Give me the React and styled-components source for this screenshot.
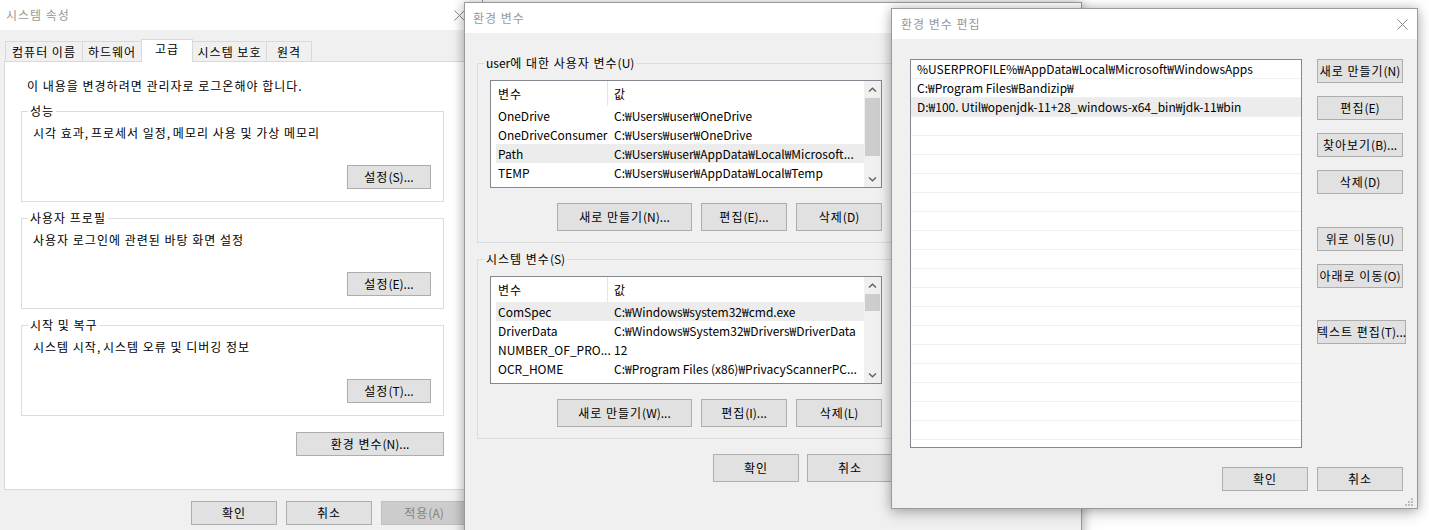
import React from "react";
import styled, { createGlobalStyle } from "styled-components";

const GlobalStyle = createGlobalStyle`
  html, body { margin: 0; padding: 0; background: #fff; }
  * { box-sizing: border-box; }
`;

const Desktop = styled.div`
  position: relative;
  width: 1429px;
  height: 530px;
  overflow: hidden;
  background: #fff;
  font-family: "Noto Sans CJK KR", "Noto Sans", sans-serif;
  font-size: 12px;
  line-height: 16px;
  color: #000;
`;

/* Hangul in the reference font is a little wider than in Noto Sans CJK */
const HangulRun = styled.span`
  letter-spacing: 1px;
`;

function K({ children }) {
  if (typeof children !== "string") return children;
  const parts = children.split(/([\uAC00-\uD7A3][\uAC00-\uD7A3 ]*)/);
  return parts.map((p, i) =>
    i % 2 ? <HangulRun key={i}>{p}</HangulRun> : p
  );
}

const Window = styled.section`
  position: absolute;
  left: ${(p) => p.$x}px;
  top: ${(p) => p.$y}px;
  width: ${(p) => p.$w}px;
  height: ${(p) => p.$h}px;
  z-index: ${(p) => p.$z};
  background: #f0f0f0;
  border: 1px solid #9a9a9a;
  box-shadow: ${(p) =>
    p.$shadow
      ? "0 0 10px rgba(0,0,0,0.22), 0 5px 14px rgba(0,0,0,0.18)"
      : "none"};
  display: flex;
  flex-direction: column;
`;

const TitleBar = styled.header`
  flex: none;
  height: ${(p) => p.$h}px;
  background: #fff;
  display: flex;
  align-items: center;
  padding-left: ${(p) => p.$pad}px;
  color: #999;
`;

const TitleText = styled.span`
  flex: 1;
  white-space: nowrap;
`;

const CloseBox = styled.div`
  width: ${(p) => p.$w}px;
  height: 100%;
  display: flex;
  align-items: center;
  justify-content: center;
`;

const CloseIcon = () => (
  <svg width="11" height="11" viewBox="0 0 11 11">
    <path d="M0.5 0.5 L10.5 10.5 M10.5 0.5 L0.5 10.5" stroke="#8a8a8a" strokeWidth="1" fill="none" />
  </svg>
);

const Btn = styled.button`
  flex: none;
  width: ${(p) => p.$w}px;
  height: ${(p) => p.$h || 24}px;
  margin: 0;
  padding: 0;
  font: inherit;
  line-height: 16px;
  white-space: nowrap;
  color: ${(p) => (p.disabled ? "#838383" : "#000")};
  background: ${(p) => (p.disabled ? "#cccccc" : "#e1e1e1")};
  border: 1px solid ${(p) => (p.disabled ? "#bfbfbf" : "#adadad")};
  display: flex;
  align-items: center;
  justify-content: center;
`;

const Button = ({ children, ...rest }) => (
  <Btn {...rest}>
    <K>{children}</K>
  </Btn>
);

const ButtonRow = styled.div`
  display: flex;
  justify-content: flex-end;
  gap: ${(p) => p.$gap}px;
  margin-top: ${(p) => p.$mt}px;
  padding-right: ${(p) => p.$pr || 0}px;
`;

/* ---------- Dialog 1: 시스템 속성 ---------- */

const SysBody = styled.div`
  flex: 1;
  padding: 9px 4px 0 4px;
  display: flex;
  flex-direction: column;
`;

const TabRow = styled.div`
  position: relative;
  z-index: 1;
  height: 22px;
  padding-left: 1px;
  display: flex;
  align-items: flex-end;
`;

const Tab = styled.div`
  width: ${(p) => p.$w}px;
  height: ${(p) => (p.$active ? 23 : 20)}px;
  margin-bottom: ${(p) => (p.$active ? -1 : 0)}px;
  margin-left: -1px;
  background: ${(p) => (p.$active ? "#fff" : "#f0f0f0")};
  border: 1px solid #d9d9d9;
  border-bottom: none;
  display: flex;
  align-items: center;
  justify-content: center;
  padding-bottom: ${(p) => (p.$active ? 4 : 0)}px;
  white-space: nowrap;
  &:first-child {
    margin-left: 0;
  }
`;

const TabPanel = styled.div`
  height: 429px;
  background: #fff;
  border: 1px solid #d9d9d9;
  padding: 16px 0 0 16px;
`;

const PanelColumn = styled.div`
  width: 423px;
  display: flex;
  flex-direction: column;
`;

const Notice = styled.div`
  padding-left: 6px;
  white-space: nowrap;
`;

const GroupBox = styled.fieldset`
  width: ${(p) => p.$w}px;
  margin: ${(p) => p.$mt}px 0 0 0;
  padding: 0 ${(p) => p.$pr}px ${(p) => p.$pb}px ${(p) => p.$pl}px;
  border: 1px solid #dcdcdc;
  min-inline-size: 0;
  display: flex;
  flex-direction: column;
`;

const Legend = styled.legend`
  padding: 0 2px;
  margin-left: ${(p) => p.$ml}px;
  line-height: 16px;
  white-space: nowrap;
`;

const GroupText = styled.div`
  margin-top: 6px;
  white-space: nowrap;
`;

/* ---------- Dialog 2: 환경 변수 ---------- */

const EnvBody = styled.div`
  flex: 1;
  padding: 22px 0 0 12px;
`;

const EnvColumn = styled.div`
  width: 418px;
  display: flex;
  flex-direction: column;
`;

const ListView = styled.div`
  margin-top: 9px;
  width: 392px;
  height: 108px;
  background: #fff;
  border: 1px solid #828790;
  display: flex;
  overflow: hidden;
`;

const ListMain = styled.div`
  flex: 1;
  min-width: 0;
  padding-left: 5px;
  overflow: hidden;
`;

const ListGrid = styled.div`
  display: grid;
  grid-template-columns: 112px 1fr;
  height: ${(p) => p.$h}px;
  background: ${(p) => (p.$sel ? "#ececec" : "transparent")};
  align-items: center;
`;

const HeadCell = styled.div`
  height: 100%;
  display: flex;
  align-items: center;
  padding-left: ${(p) => p.$pl}px;
  border-right: ${(p) => (p.$divider ? "1px solid #e5e5e5" : "none")};
`;

const Cell = styled.div`
  padding-left: ${(p) => p.$pl}px;
  white-space: nowrap;
  overflow: ${(p) => (p.$clip ? "hidden" : "visible")};
`;

const ScrollBar = styled.div`
  width: 17px;
  flex: none;
  background: #f0f0f0;
  display: flex;
  flex-direction: column;
  align-items: center;
`;

const ArrowBox = styled.div`
  height: 17px;
  width: 17px;
  flex: none;
  display: flex;
  align-items: center;
  justify-content: center;
`;

const Track = styled.div`
  flex: 1;
  width: 100%;
  display: flex;
  justify-content: center;
`;

const Thumb = styled.div`
  width: 15px;
  height: ${(p) => p.$h}px;
  background: #cdcdcd;
`;

const Chevron = ({ down }) => (
  <svg width="9" height="6" viewBox="0 0 9 6">
    <path
      d={down ? "M1 1.5 L4.5 4.8 L8 1.5" : "M1 4.5 L4.5 1.2 L8 4.5"}
      stroke="#606060"
      strokeWidth="1.4"
      fill="none"
    />
  </svg>
);

/* ---------- Dialog 3: 환경 변수 편집 ---------- */

const EditBody = styled.div`
  flex: 1;
  padding: 20px 11px 0 18px;
  display: flex;
  flex-direction: column;
`;

const EditMain = styled.div`
  display: flex;
  gap: 15px;
`;

const EditList = styled.div`
  width: 392px;
  height: 389px;
  flex: none;
  background: #fff;
  border: 1px solid #828790;
  overflow: hidden;
`;

const EditRow = styled.div`
  height: 19px;
  padding-left: 6px;
  border-bottom: 1px solid #efefef;
  background: ${(p) => (p.$sel ? "#ececec" : "#fff")};
  display: flex;
  align-items: center;
  white-space: nowrap;
`;

const SideButtons = styled.div`
  width: 89px;
  display: flex;
  flex-direction: column;
  align-items: flex-start;
  gap: 13px;
`;

const SideSpacer = styled.div`
  height: ${(p) => p.$h}px;
  margin-top: -13px;
`;

const Grip = styled.svg`
  position: absolute;
  right: 4px;
  bottom: 2px;
`;

const userVars = [
  ["OneDrive", "C:₩Users₩user₩OneDrive"],
  ["OneDriveConsumer", "C:₩Users₩user₩OneDrive"],
  ["Path", "C:₩Users₩user₩AppData₩Local₩Microsoft..."],
  ["TEMP", "C:₩Users₩user₩AppData₩Local₩Temp"],
];
const sysVars = [
  ["ComSpec", "C:₩Windows₩system32₩cmd.exe"],
  ["DriverData", "C:₩Windows₩System32₩Drivers₩DriverData"],
  ["NUMBER_OF_PRO...", "12"],
  ["OCR_HOME", "C:₩Program Files (x86)₩PrivacyScannerPC..."],
];
const pathItems = [
  "%USERPROFILE%₩AppData₩Local₩Microsoft₩WindowsApps",
  "C:₩Program Files₩Bandizip₩",
  "D:₩100. Util₩openjdk-11+28_windows-x64_bin₩jdk-11₩bin",
];

function VarList({ rows, selected, thumb }) {
  return (
    <ListView>
      <ListMain>
        <ListGrid $h={25}>
          <HeadCell $pl={2} $divider>
            <K>변수</K>
          </HeadCell>
          <HeadCell $pl={6}>
            <K>값</K>
          </HeadCell>
        </ListGrid>
        {rows.map(([k, v], i) => (
          <ListGrid key={k} $h={19} $sel={i === selected}>
            <Cell $pl={2}>{k}</Cell>
            <Cell $pl={6} $clip>{v}</Cell>
          </ListGrid>
        ))}
      </ListMain>
      <ScrollBar>
        <ArrowBox>
          <Chevron />
        </ArrowBox>
        <Track>
          <Thumb $h={thumb} />
        </Track>
        <ArrowBox>
          <Chevron down />
        </ArrowBox>
      </ScrollBar>
    </ListView>
  );
}

function SettingGroup({ title, text, button, first }) {
  return (
    <GroupBox $w={423} $mt={first ? 9 : 8} $pl={11} $pr={12} $pb={12}>
      <Legend $ml={-5}>
        <K>{title}</K>
      </Legend>
      <GroupText>
        <K>{text}</K>
      </GroupText>
      <ButtonRow $gap={0} $mt={24}>
        <Button $w={84}>{button}</Button>
      </ButtonRow>
    </GroupBox>
  );
}

function EnvGroup({ title, first, rows, selected, thumb, buttons }) {
  return (
    <GroupBox $w={418} $mt={first ? 0 : 8} $pl={12} $pr={12} $pb={11}>
      <Legend $ml={-6}>
        <K>{title}</K>
      </Legend>
      <VarList rows={rows} selected={selected} thumb={thumb} />
      <ButtonRow $gap={9} $mt={15}>
        <Button $w={135} $h={28}>{buttons[0]}</Button>
        <Button $w={86} $h={28}>{buttons[1]}</Button>
        <Button $w={86} $h={28}>{buttons[2]}</Button>
      </ButtonRow>
    </GroupBox>
  );
}

const tabs = [
  ["컴퓨터 이름", 78],
  ["하드웨어", 60],
  ["고급", 52, true],
  ["시스템 보호", 75],
  ["원격", 46],
];

export default function App() {
  const emptyRows = Array.from({ length: 18 });
  return (
    <Desktop>
      <GlobalStyle />

      <Window $x={-1} $y={-1} $w={484} $h={570} $z={1}>
        <TitleBar $h={30} $pad={6}>
          <TitleText>
            <K>시스템 속성</K>
          </TitleText>
          <CloseBox $w={46}>
            <CloseIcon />
          </CloseBox>
        </TitleBar>
        <SysBody>
          <TabRow>
            {tabs.map(([label, w, active]) => (
              <Tab key={label} $w={w} $active={active}>
                <K>{label}</K>
              </Tab>
            ))}
          </TabRow>
          <TabPanel>
            <PanelColumn>
              <Notice>
                <K>이 내용을 변경하려면 관리자로 로그온해야 합니다.</K>
              </Notice>
              <SettingGroup
                first
                title="성능"
                text="시각 효과, 프로세서 일정, 메모리 사용 및 가상 메모리"
                button="설정(S)..."
              />
              <SettingGroup
                title="사용자 프로필"
                text="사용자 로그인에 관련된 바탕 화면 설정"
                button="설정(E)..."
              />
              <SettingGroup
                title="시작 및 복구"
                text="시스템 시작, 시스템 오류 및 디버깅 정보"
                button="설정(T)..."
              />
              <ButtonRow $gap={0} $mt={16}>
                <Button $w={148}>환경 변수(N)...</Button>
              </ButtonRow>
            </PanelColumn>
          </TabPanel>
          <ButtonRow $gap={9} $mt={11} $pr={11}>
            <Button $w={86}>확인</Button>
            <Button $w={86}>취소</Button>
            <Button $w={86} disabled>
              적용(A)
            </Button>
          </ButtonRow>
        </SysBody>
      </Window>

      <Window $x={464} $y={2} $w={618} $h={570} $z={2} $shadow>
        <TitleBar $h={30} $pad={8}>
          <TitleText>
            <K>환경 변수</K>
          </TitleText>
          <CloseBox $w={46}>
            <CloseIcon />
          </CloseBox>
        </TitleBar>
        <EnvBody>
          <EnvColumn>
            <EnvGroup
              first
              title="user에 대한 사용자 변수(U)"
              rows={userVars}
              selected={2}
              thumb={58}
              buttons={["새로 만들기(N)...", "편집(E)...", "삭제(D)"]}
            />
            <EnvGroup
              title="시스템 변수(S)"
              rows={sysVars}
              selected={0}
              thumb={17}
              buttons={["새로 만들기(W)...", "편집(I)...", "삭제(L)"]}
            />
            <ButtonRow $gap={8} $mt={15} $pr={2}>
              <Button $w={86} $h={28}>확인</Button>
              <Button $w={86} $h={28}>취소</Button>
            </ButtonRow>
          </EnvColumn>
        </EnvBody>
      </Window>

      <Window $x={891} $y={8} $w={527} $h={501} $z={3} $shadow>
        <TitleBar $h={30} $pad={9}>
          <TitleText>
            <K>환경 변수 편집</K>
          </TitleText>
          <CloseBox $w={30}>
            <CloseIcon />
          </CloseBox>
        </TitleBar>
        <EditBody>
          <EditMain>
            <EditList>
              {pathItems.map((p, i) => (
                <EditRow key={p} $sel={i === 2}>
                  {p}
                </EditRow>
              ))}
              {emptyRows.map((_, i) => (
                <EditRow key={i} />
              ))}
            </EditList>
            <SideButtons>
              <Button $w={86}>새로 만들기(N)</Button>
              <Button $w={86}>편집(E)</Button>
              <Button $w={86}>찾아보기(B)...</Button>
              <Button $w={86}>삭제(D)</Button>
              <SideSpacer $h={20} />
              <Button $w={86}>위로 이동(U)</Button>
              <Button $w={86}>아래로 이동(O)</Button>
              <SideSpacer $h={19} />
              <Button $w={89}>텍스트 편집(T)...</Button>
            </SideButtons>
          </EditMain>
          <ButtonRow $gap={9} $mt={19} $pr={3}>
            <Button $w={86}>확인</Button>
            <Button $w={86}>취소</Button>
          </ButtonRow>
        </EditBody>
        <Grip width="8" height="8" viewBox="0 0 8 8">
          <g fill="#bdbdbd">
            <rect x="6" y="0" width="2" height="2" />
            <rect x="3" y="3" width="2" height="2" />
            <rect x="6" y="3" width="2" height="2" />
            <rect x="0" y="6" width="2" height="2" />
            <rect x="3" y="6" width="2" height="2" />
            <rect x="6" y="6" width="2" height="2" />
          </g>
        </Grip>
      </Window>
    </Desktop>
  );
}
